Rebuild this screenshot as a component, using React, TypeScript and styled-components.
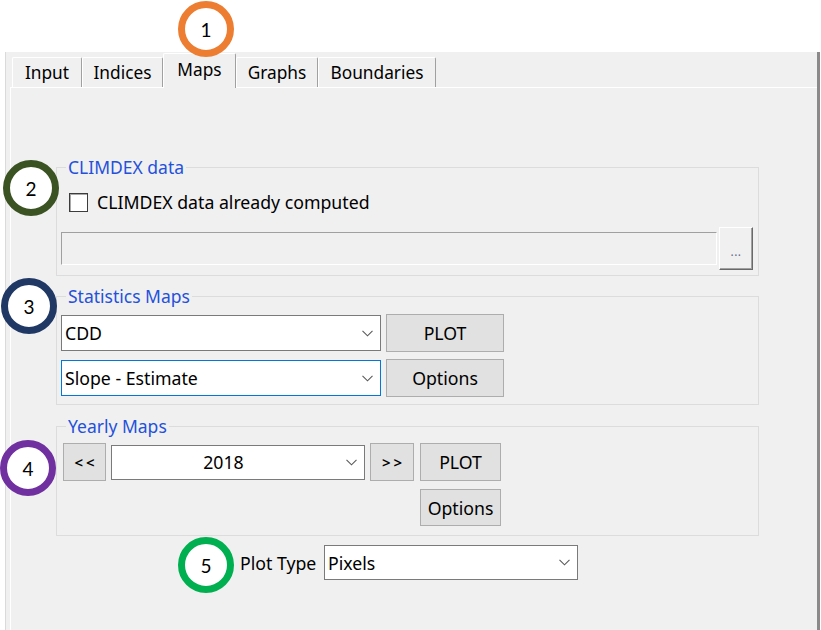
import React from "react";
import styled, { createGlobalStyle } from "styled-components";

const GlobalStyle = createGlobalStyle`
  html, body { margin: 0; padding: 0; background: #fff; }
  body { font-family: "Noto Sans", "Open Sans", sans-serif; }
  * { box-sizing: border-box; }
`;

const Page = styled.div`
  position: relative;
  width: 821px;
  height: 630px;
  overflow: hidden;
  background: #fff;
  padding-top: 52px;
  font-family: "Noto Sans", "Open Sans", sans-serif;
  font-size: 17.7px;
  color: #000;
`;

const Frame = styled.div`
  margin-left: 5px;
  width: 815px;
  height: 578px;
  background: #f0f0f0;
  border-left: 1px solid #dadada;
  border-right: 3px solid #8a8a8a;
  padding-left: 4px;
  display: flex;
  flex-direction: column;
`;

const TabStrip = styled.div`
  height: 35px;
  display: flex;
  align-items: flex-end;
  padding-left: 2px;
`;

const Tab = styled.div<{ $active?: boolean; $w: number }>`
  width: ${(p) => p.$w}px;
  height: ${(p) => (p.$active ? 35 : 30)}px;
  margin-bottom: ${(p) => (p.$active ? -1 : 0)}px;
  position: relative;
  z-index: ${(p) => (p.$active ? 1 : 0)};
  background: #f0f0f0;
  border-top: 1px solid #fff;
  border-left: 1px solid #fff;
  border-right: 1px solid #a0a0a0;
  border-radius: 2px 2px 0 0;
  display: flex;
  align-items: center;
  justify-content: center;
  padding-bottom: ${(p) => (p.$active ? 4 : 1)}px;
  font-size: 17.3px;
`;

const TabPanel = styled.div`
  flex: 1;
  border-top: 1px solid #fff;
  border-left: 1px solid #fff;
  padding: 69px 0 0 45px;
  display: flex;
  flex-direction: column;
`;

const Group = styled.fieldset<{ $mt: number; $pb: number }>`
  margin: ${(p) => p.$mt}px 0 0 0;
  padding: 0 0 ${(p) => p.$pb}px 4px;
  width: 703px;
  min-width: 0;
  border: 1px solid #dcdcdc;
  display: flex;
  flex-direction: column;
`;

const Legend = styled.legend`
  margin-left: 5px;
  padding: 0 2px;
  line-height: 20px;
  font-size: 17.5px;
  color: #2450dc;
`;

const Row = styled.div<{ $mt: number; $h: number; $ml?: number; $gap?: number }>`
  margin-top: ${(p) => p.$mt}px;
  margin-left: ${(p) => p.$ml ?? 0}px;
  height: ${(p) => p.$h}px;
  display: flex;
  align-items: center;
  gap: ${(p) => p.$gap ?? 5}px;
`;

const CheckBox = styled.span`
  width: 19px;
  height: 19px;
  background: #fff;
  border: 1px solid #3c3c3c;
  box-shadow: inset 1px 1px 0 #a8a8a8;
`;

const Label = styled.span<{ $w?: number }>`
  font-size: 17.7px;
  white-space: nowrap;
  ${(p) => (p.$w ? `width: ${p.$w}px;` : "")}
`;

const PathBox = styled.div`
  width: 656px;
  height: 33px;
  background: #f0f0f0;
  border-top: 1px solid #a0a0a0;
  border-left: 1px solid #a0a0a0;
  border-bottom: 1px solid #fff;
  border-right: 1px solid #fff;
`;

const BrowseButton = styled.div`
  width: 34px;
  height: 43px;
  background: #f0f0f0;
  border-top: 1px solid #fff;
  border-left: 1px solid #fff;
  border-right: 1px solid #696969;
  border-bottom: 1px solid #696969;
  box-shadow: inset -1px -1px 0 #a0a0a0;
  display: flex;
  align-items: center;
  justify-content: center;
  padding-top: 6px;
  font-size: 12px;
  letter-spacing: 0.5px;
  color: #6a6a8c;
`;

const Combo = styled.div<{ $w: number; $h?: number; $focused?: boolean }>`
  width: ${(p) => p.$w}px;
  height: ${(p) => p.$h ?? 36}px;
  background: #fff;
  border: 1px solid ${(p) => (p.$focused ? "#0078d7" : "#7a7a7a")};
  display: flex;
  align-items: center;
  padding: 0 7px 0 3px;
  font-size: 17.7px;
`;

const ComboText = styled.span<{ $center?: boolean }>`
  flex: 1;
  text-align: ${(p) => (p.$center ? "center" : "left")};
  padding-right: ${(p) => (p.$center ? 14 : 0)}px;
  white-space: nowrap;
`;

const Button = styled.div<{ $w: number; $h?: number; $ml?: number }>`
  width: ${(p) => p.$w}px;
  height: ${(p) => p.$h ?? 38}px;
  margin-left: ${(p) => p.$ml ?? 0}px;
  background: #e1e1e1;
  border: 1px solid #adadad;
  display: flex;
  align-items: center;
  justify-content: center;
  font-size: 17.7px;
  white-space: nowrap;
`;

const Arrows = styled.span`
  font-size: 15px;
  font-weight: 600;
  letter-spacing: 3px;
  padding-left: 3px;
`;

const Marker = styled.div<{ $x: number; $y: number; $c: string }>`
  position: absolute;
  left: ${(p) => p.$x}px;
  top: ${(p) => p.$y}px;
  width: 56px;
  height: 56px;
  border-radius: 50%;
  border: 7px solid ${(p) => p.$c};
  background: #fff;
  display: flex;
  align-items: center;
  justify-content: center;
  font-family: Lato, "Liberation Sans", sans-serif;
  font-size: 19px;
  color: #000;
  z-index: 5;
`;

const Chevron = () => (
  <svg width="11" height="7" viewBox="0 0 11 7">
    <polyline points="0.5,0.8 5.5,5.8 10.5,0.8" fill="none" stroke="#5a5a5a" strokeWidth="1.1" />
  </svg>
);

const markers = [
  { n: "1", x: 178, y: 1, c: "#ed7d31" },
  { n: "2", x: 3, y: 160, c: "#3b5323" },
  { n: "3", x: 1, y: 278, c: "#1f3864" },
  { n: "4", x: 0, y: 440, c: "#7030a0" },
  { n: "5", x: 178, y: 537, c: "#00b050" },
];

const tabs = [
  { label: "Input", w: 70 },
  { label: "Indices", w: 81 },
  { label: "Maps", w: 73, active: true },
  { label: "Graphs", w: 82 },
  { label: "Boundaries", w: 118 },
];

export default function App() {
  return (
    <Page>
      <GlobalStyle />
      <Frame>
        <TabStrip>
          {tabs.map((t) => (
            <Tab key={t.label} $w={t.w} $active={t.active}>
              {t.label}
            </Tab>
          ))}
        </TabStrip>
        <TabPanel>
          <Group $mt={0} $pb={5}>
            <Legend>CLIMDEX data</Legend>
            <Row $mt={15} $h={20} $ml={8} $gap={9}>
              <CheckBox />
              <Label>CLIMDEX data already computed</Label>
            </Row>
            <Row $mt={15} $h={43} $gap={2}>
              <PathBox />
              <BrowseButton>...</BrowseButton>
            </Row>
          </Group>

          <Group $mt={10} $pb={7}>
            <Legend>Statistics Maps</Legend>
            <Row $mt={8} $h={38}>
              <Combo $w={320}>
                <ComboText>CDD</ComboText>
                <Chevron />
              </Combo>
              <Button $w={118}>PLOT</Button>
            </Row>
            <Row $mt={7} $h={38}>
              <Combo $w={320} $focused>
                <ComboText>Slope - Estimate</ComboText>
                <Chevron />
              </Combo>
              <Button $w={118}>Options</Button>
            </Row>
          </Group>

          <Group $mt={11} $pb={9}>
            <Legend>Yearly Maps</Legend>
            <Row $mt={7} $h={38} $ml={2}>
              <Button $w={43}>
                <Arrows>&lt;&lt;</Arrows>
              </Button>
              <Combo $w={254} $h={35}>
                <ComboText $center>2018</ComboText>
                <Chevron />
              </Combo>
              <Button $w={44}>
                <Arrows>&gt;&gt;</Arrows>
              </Button>
              <Button $w={81} $ml={1}>PLOT</Button>
            </Row>
            <Row $mt={8} $h={37} $ml={359}>
              <Button $w={81} $h={37}>Options</Button>
            </Row>
          </Group>

          <Row $mt={9} $h={35} $ml={184} $gap={0}>
            <Label $w={84}>Plot Type</Label>
            <Combo $w={254} $h={35}>
              <ComboText>Pixels</ComboText>
              <Chevron />
            </Combo>
          </Row>
        </TabPanel>
      </Frame>
      {markers.map((m) => (
        <Marker key={m.n} $x={m.x} $y={m.y} $c={m.c}>
          {m.n}
        </Marker>
      ))}
    </Page>
  );
}
